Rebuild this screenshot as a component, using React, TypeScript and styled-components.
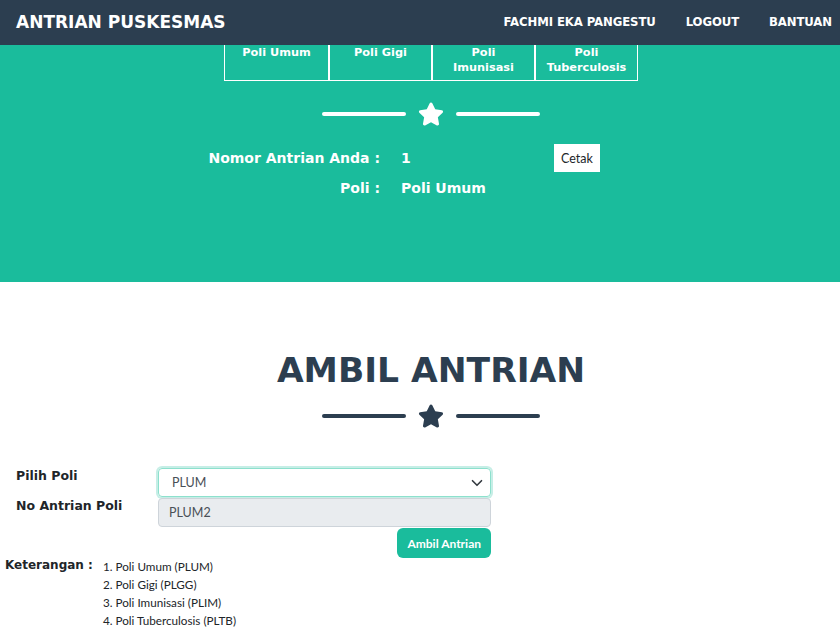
import React from "react";
import styled, { createGlobalStyle } from "styled-components";

const GlobalStyle = createGlobalStyle`
  html, body {
    margin: 0;
    padding: 0;
    background: #ffffff;
    overflow-x: hidden;
  }
  body {
    font-family: "DejaVu Sans", "Open Sans", sans-serif;
  }
`;

const TEAL = "#1abc9c";
const NAVY = "#2c3e50";

const polis = [
  { label: ["Poli Umum"] },
  { label: ["Poli Gigi"] },
  { label: ["Poli", "Imunisasi"] },
  { label: ["Poli", "Tuberculosis"] }
];

const keterangan = [
  "1. Poli Umum (PLUM)",
  "2. Poli Gigi (PLGG)",
  "3. Poli Imunisasi (PLIM)",
  "4. Poli Tuberculosis (PLTB)"
];

const Star: React.FC<{ color: string }> = ({ color }) => (
  <svg width="26" height="24" viewBox="0 0 576 512">
    <path
      fill={color}
      d="M259.3 17.8L194 150.2 47.9 171.5c-26.2 3.8-36.7 36.1-17.7 54.6l105.7 103-25 145.5c-4.5 26.3 23.2 46 46.4 33.7L288 439.6l130.7 68.7c23.2 12.2 50.9-7.4 46.4-33.7l-25-145.5 105.7-103c19-18.5 8.5-50.8-17.7-54.6L382 150.2 316.7 17.8c-11.7-23.6-45.6-23.9-57.4 0z"
    />
  </svg>
);

const Divider: React.FC<{ color: string; $top?: number }> = ({ color, $top = 21 }) => (
  <DividerRow $top={$top}>
    <DividerLine $color={color} />
    <Star color={color} />
    <DividerLine $color={color} />
  </DividerRow>
);

const App: React.FC = () => {
  return (
    <>
      <GlobalStyle />
      <Navbar>
        <Brand>ANTRIAN PUSKESMAS</Brand>
        <NavLinks>
          <NavLink>FACHMI EKA PANGESTU</NavLink>
          <NavLink>LOGOUT</NavLink>
          <NavLink>BANTUAN</NavLink>
        </NavLinks>
      </Navbar>

      <Masthead>
        <Inner>
          <PoliTabs>
            {polis.map((p, i) => (
              <PoliTab key={i}>
                {p.label.map((l, j) => (
                  <span key={j}>{l}</span>
                ))}
              </PoliTab>
            ))}
          </PoliTabs>

          <Divider color="#ffffff" />

          <InfoGrid>
            <InfoLabel>Nomor Antrian Anda :</InfoLabel>
            <InfoValue>1</InfoValue>
            <CetakButton>Cetak</CetakButton>
            <InfoLabel>Poli :</InfoLabel>
            <InfoValue>Poli Umum</InfoValue>
            <span />
          </InfoGrid>
        </Inner>
      </Masthead>

      <Section>
        <Inner>
          <Heading>AMBIL ANTRIAN</Heading>
          <Divider color={NAVY} $top={11} />
        </Inner>

        <Form>
          <FieldLabel>Pilih Poli</FieldLabel>
          <SelectBox>
            <span>PLUM</span>
            <svg width="12" height="12" viewBox="0 0 16 16">
              <path
                d="M2 5l6 6 6-6"
                fill="none"
                stroke="#343a40"
                strokeWidth="2.2"
                strokeLinecap="round"
                strokeLinejoin="round"
              />
            </svg>
          </SelectBox>
          <FieldLabel>No Antrian Poli</FieldLabel>
          <ReadonlyBox>PLUM2</ReadonlyBox>
          <span />
          <SubmitRow>
            <SubmitButton>Ambil Antrian</SubmitButton>
          </SubmitRow>
        </Form>

        <Notes>
          <NotesLabel>Keterangan :</NotesLabel>
          <NotesList>
            {keterangan.map((k) => (
              <li key={k}>{k}</li>
            ))}
          </NotesList>
        </Notes>
      </Section>
    </>
  );
};

const Navbar = styled.nav`
  position: relative;
  z-index: 2;
  height: 45px;
  background: ${NAVY};
  display: flex;
  align-items: center;
  justify-content: space-between;
  padding: 0 8px 0 16px;
  color: #ffffff;
`;

const Brand = styled.div`
  font-weight: 700;
  font-size: 17px;
  margin-top: -2px;
`;

const NavLinks = styled.div`
  display: flex;
  gap: 30px;
  margin-top: -1px;
`;

const NavLink = styled.a`
  font-weight: 700;
  font-size: 11.7px;
  letter-spacing: -0.1px;
  color: #ffffff;
`;

const Masthead = styled.header`
  background: ${TEAL};
  height: 237px;
  overflow: hidden;
`;

const Inner = styled.div`
  width: 862px;
  display: flex;
  flex-direction: column;
  align-items: center;
`;

const PoliTabs = styled.div`
  display: flex;
  margin-top: -20px;
  border: 1px solid #ffffff;
  border-top: none;
`;

const PoliTab = styled.div`
  width: 103px;
  height: 55px;
  padding-top: 20px;
  box-sizing: border-box;
  border-left: 2px solid #ffffff;
  display: flex;
  flex-direction: column;
  align-items: center;
  color: #ffffff;
  font-weight: 700;
  font-size: 11.3px;
  line-height: 15px;
  &:first-child {
    border-left: none;
  }
`;

const DividerRow = styled.div<{ $top: number }>`
  display: flex;
  align-items: center;
  gap: 12px;
  margin-top: ${(p) => p.$top}px;
`;

const DividerLine = styled.div<{ $color: string }>`
  width: 84px;
  height: 4px;
  border-radius: 2px;
  background: ${(p) => p.$color};
`;

const InfoGrid = styled.div`
  display: grid;
  grid-template-columns: 175px 132px 46px;
  column-gap: 21px;
  row-gap: 2px;
  align-items: center;
  margin-top: 18px;
  margin-right: 57px;
  color: #ffffff;
  font-weight: 700;
  font-size: 14px;
`;

const InfoLabel = styled.div`
  text-align: right;
  height: 28px;
  line-height: 28px;
`;

const InfoValue = styled.div`
  height: 28px;
  line-height: 28px;
`;

const CetakButton = styled.button`
  width: 46px;
  height: 28px;
  background: #ffffff;
  border: none;
  padding: 0;
  font-family: "Lato", sans-serif;
  font-size: 12.5px;
  color: #212529;
`;

const Section = styled.section`
  padding-top: 65px;
`;

const Heading = styled.h1`
  margin: 0;
  color: ${NAVY};
  font-weight: 700;
  font-size: 34.5px;
  line-height: 46px;
`;

const Form = styled.div`
  display: grid;
  grid-template-columns: 142px 333px;
  padding-left: 16px;
  margin-top: 40px;
  row-gap: 1px;
`;

const FieldLabel = styled.div`
  font-weight: 700;
  font-size: 12.5px;
  color: #212529;
`;

const SelectBox = styled.div`
  height: 29px;
  box-sizing: border-box;
  border: 1px solid #8de0cd;
  box-shadow: 0 0 0 2px rgba(26, 188, 156, 0.25);
  border-radius: 4px;
  display: flex;
  align-items: center;
  justify-content: space-between;
  padding: 0 7px 0 13px;
  font-family: "Lato", sans-serif;
  font-size: 12.5px;
  color: #495057;
`;

const ReadonlyBox = styled.div`
  height: 29px;
  box-sizing: border-box;
  background: #e9ecef;
  border: 1px solid #ced4da;
  border-radius: 4px;
  display: flex;
  align-items: center;
  padding-left: 10px;
  font-family: "Lato", sans-serif;
  font-size: 12.5px;
  color: #495057;
`;

const SubmitRow = styled.div`
  display: flex;
  justify-content: flex-end;
`;

const SubmitButton = styled.button`
  height: 30px;
  padding: 0 10px;
  background: ${TEAL};
  border: none;
  border-radius: 6px;
  color: #ffffff;
  font-family: "Lato", sans-serif;
  font-weight: 700;
  font-size: 12px;
`;

const Notes = styled.div`
  display: flex;
  padding-left: 5px;
`;

const NotesLabel = styled.div`
  width: 98px;
  font-weight: 700;
  font-size: 12px;
  color: #212529;
`;

const NotesList = styled.ul`
  list-style: none;
  margin: -1px 0 0;
  padding: 0;
  font-family: "Lato", sans-serif;
  font-size: 11.7px;
  color: #212529;
  li {
    line-height: 18px;
  }
`;

export default App;
